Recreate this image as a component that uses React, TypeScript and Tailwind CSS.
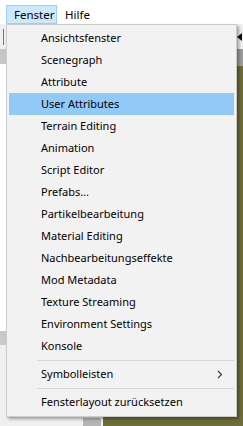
import React from 'react';

const items = [
  'Ansichtsfenster',
  'Scenegraph',
  'Attribute',
  'User Attributes',
  'Terrain Editing',
  'Animation',
  'Script Editor',
  'Prefabs...',
  'Partikelbearbeitung',
  'Material Editing',
  'Nachbearbeitungseffekte',
  'Mod Metadata',
  'Texture Streaming',
  'Environment Settings',
  'Konsole',
];

const Separator = () => (
  <div className="h-[6px] flex items-center">
    <div className="h-px w-full ml-[30px] mr-[2px] bg-[#d7d7d7]" />
  </div>
);

const MenuItem: React.FC<{ label: string; active?: boolean; sub?: boolean }> = ({ label, active, sub }) => (
  <div
    className={`h-[22px] mx-[2px] pl-[32px] pr-[10px] flex items-center justify-between text-[#000000] ${
      active ? 'bg-[#91c9f7]' : ''
    }`}
  >
    <span>{label}</span>
    {sub && (
      <svg width="6" height="9" viewBox="0 0 6 9" className="mr-[1px]">
        <path d="M1 1 L4.5 4.5 L1 8" fill="none" stroke="#333" strokeWidth="1.1" />
      </svg>
    )}
  </div>
);

export default function App() {
  return (
    <div
      className="relative w-[243px] h-[426px] overflow-hidden bg-white flex flex-col text-[11px]"
      style={{ fontFamily: '"Noto Sans", "Liberation Sans", sans-serif' }}
    >
      <div className="h-[5px] shrink-0" />

      {/* menu bar */}
      <div className="h-[19px] shrink-0 flex items-stretch pl-[6px] leading-none text-[11.5px]">
        <div className="w-[51px] border border-[#99d1ff] bg-[#cce8ff] flex items-center pl-[7px]">Fenster</div>
        <div className="flex items-center pl-[8px]">Hilfe</div>
      </div>

      {/* toolbar */}
      <div className="h-[25px] shrink-0 bg-[#f0f0f0] flex items-center justify-between pl-[3px] pr-[1px]">
        <div className="w-px h-[16px] bg-[#777777]" />
        <svg width="5" height="8" viewBox="0 0 5 8">
          <path d="M5 0 L0 4 L5 8 Z" fill="#111" />
        </svg>
      </div>

      {/* workspace */}
      <div className="flex-1 flex">
        <div className="w-[103px] flex flex-col">
          <div className="h-[15px] bg-[#c6c6c6]" />
          <div className="h-[267px] bg-white" />
          <div className="h-[14px] bg-[#c9c9c9]" />
          <div className="flex-1 bg-[#f0f0f0] flex items-end justify-end">
            <div className="h-[8px] w-[18px] mr-[2px] bg-[#b5b5b5]" />
          </div>
        </div>
        <div className="flex-1 flex flex-col">
          <div className="h-[17px] bg-[#9d9d9d]" />
          <div className="flex-1 bg-[#6e6c3c]" />
        </div>
      </div>

      {/* dropdown */}
      <div className="absolute left-[6px] top-[24px] w-[231px] border border-[#cccccc] bg-[#f2f2f2] pt-[2px] pb-[3px] shadow-[2px_2px_3px_rgba(0,0,0,0.35)]">
        {items.map((label) => (
          <MenuItem key={label} label={label} active={label === 'User Attributes'} />
        ))}
        <Separator />
        <MenuItem label="Symbolleisten" sub />
        <Separator />
        <MenuItem label="Fensterlayout zurücksetzen" />
      </div>
    </div>
  );
}
